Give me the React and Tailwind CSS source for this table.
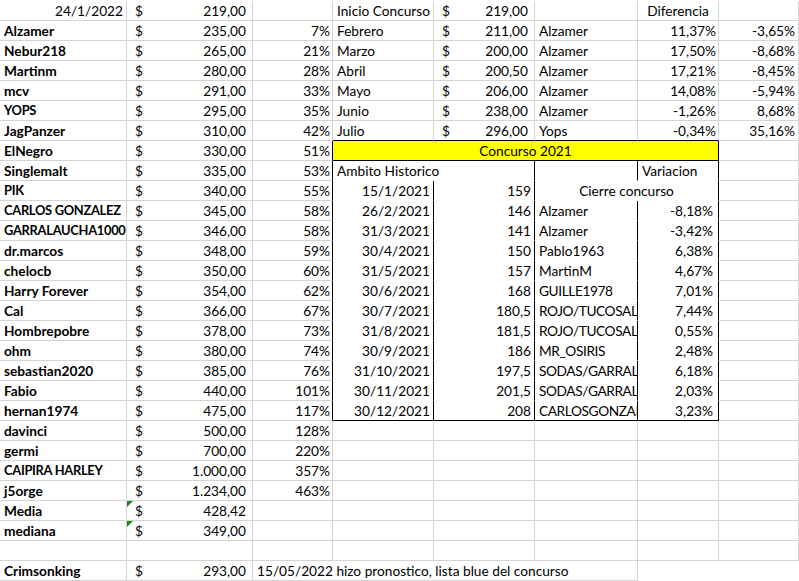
import React from "react";

const R = { g: "border-r-[#d4d4d4]", k: "border-r-black", w: "border-r-white" };
const B = { g: "border-b-[#d4d4d4]", k: "border-b-black", w: "border-b-white" };
const AL = { l: "text-left pl-[4px]", r: "text-right pr-[3px]", c: "text-center" };

function Cell({ w, r = "g", b = "g", a = "l", className = "", children }) {
  return (
    <div
      className={`relative h-[20px] shrink-0 overflow-hidden whitespace-nowrap border-r border-b leading-[19px] ${w} ${R[r]} ${B[b]} ${AL[a]} ${className}`}
    >
      {children}
    </div>
  );
}

function Money({ w, v, r = "g", b = "g", tri = false }) {
  return (
    <div
      className={`relative flex h-[20px] shrink-0 justify-between whitespace-nowrap border-r border-b pl-[8px] pr-[6px] leading-[19px] ${w} ${R[r]} ${B[b]}`}
    >
      {tri && (
        <span className="absolute left-0 top-0 h-0 w-0 border-t-[6px] border-r-[6px] border-t-[#1e8a1e] border-r-transparent" />
      )}
      <span>$</span>
      <span>{v}</span>
    </div>
  );
}

const CAPS = new Set(["YOPS", "PIK", "CARLOS GONZALEZ", "GARRALAUCHA1000", "CAIPIRA HARLEY"]);

const left = [
  ["24/1/2022", "219,00", "", true],
  ["Alzamer", "235,00", "7%"],
  ["Nebur218", "265,00", "21%"],
  ["Martinm", "280,00", "28%"],
  ["mcv", "291,00", "33%"],
  ["YOPS", "295,00", "35%"],
  ["JagPanzer", "310,00", "42%"],
  ["ElNegro", "330,00", "51%"],
  ["Singlemalt", "335,00", "53%"],
  ["PIK", "340,00", "55%"],
  ["CARLOS GONZALEZ", "345,00", "58%"],
  ["GARRALAUCHA1000", "346,00", "58%"],
  ["dr.marcos", "348,00", "59%"],
  ["chelocb", "350,00", "60%"],
  ["Harry Forever", "354,00", "62%"],
  ["Cal", "366,00", "67%"],
  ["Hombrepobre", "378,00", "73%"],
  ["ohm", "380,00", "74%"],
  ["sebastian2020", "385,00", "76%"],
  ["Fabio", "440,00", "101%"],
  ["hernan1974", "475,00", "117%"],
  ["davinci", "500,00", "128%"],
  ["germi", "700,00", "220%"],
  ["CAIPIRA HARLEY", "1.000,00", "357%"],
  ["j5orge", "1.234,00", "463%"],
  ["Media", "428,42", "", false, true],
  ["mediana", "349,00", "", false, true],
  ["", null, ""],
  ["Crimsonking", "293,00", ""],
];

const top = [
  ["Inicio Concurso", "219,00", "", "Diferencia", ""],
  ["Febrero", "211,00", "Alzamer", "11,37%", "-3,65%"],
  ["Marzo", "200,00", "Alzamer", "17,50%", "-8,68%"],
  ["Abril", "200,50", "Alzamer", "17,21%", "-8,45%"],
  ["Mayo", "206,00", "Alzamer", "14,08%", "-5,94%"],
  ["Junio", "238,00", "Alzamer", "-1,26%", "8,68%"],
  ["Julio", "296,00", "Yops", "-0,34%", "35,16%"],
];

const table = [
  ["26/2/2021", "146", "Alzamer", "-8,18%"],
  ["31/3/2021", "141", "Alzamer", "-3,42%"],
  ["30/4/2021", "150", "Pablo1963", "6,38%"],
  ["31/5/2021", "157", "MartinM", "4,67%"],
  ["30/6/2021", "168", "GUILLE1978", "7,01%", true],
  ["30/7/2021", "180,5", "ROJO/TUCOSALMON", "7,44%", true],
  ["31/8/2021", "181,5", "ROJO/TUCOSALMON", "0,55%", true],
  ["30/9/2021", "186", "MR_OSIRIS", "2,48%", true],
  ["31/10/2021", "197,5", "SODAS/GARRALAUCHA", "6,18%", true],
  ["30/11/2021", "201,5", "SODAS/GARRALAUCHA", "2,03%", true],
  ["30/12/2021", "208", "CARLOSGONZALEZ", "3,23%", true],
];

function RightPart({ i }) {
  const row = i + 1;
  if (row <= 7) {
    const [d, e, f, g, h] = top[i];
    const bb = row === 7 ? "k" : "g";
    return (
      <>
        <Cell w="w-[101px]" b={bb}>{d}</Cell>
        <Money w="w-[101px]" v={e} b={bb} />
        <Cell w="w-[103px]" b={bb}>{f}</Cell>
        <Cell w="w-[81px]" b={bb} a={row === 1 ? "c" : "r"} className={row === 1 ? "" : "!pr-[2px]"}>{g}</Cell>
        <Cell w="w-[80px]" a="r">{h}</Cell>
      </>
    );
  }
  if (row === 8) {
    return (
      <>
        <Cell w="w-[386px]" r="k" b="k" a="c" className="bg-[#ffff00]">Concurso 2021</Cell>
        <Cell w="w-[80px]" />
      </>
    );
  }
  if (row === 9) {
    return (
      <>
        <Cell w="w-[202px]" r="k" b="w">Ambito Historico</Cell>
        <Cell w="w-[103px]" r="k" b="w" />
        <Cell w="w-[81px]" r="k" b="w">Variacion</Cell>
        <Cell w="w-[80px]" />
      </>
    );
  }
  if (row === 10) {
    return (
      <>
        <Cell w="w-[101px]" r="k" b="w" a="r">15/1/2021</Cell>
        <Cell w="w-[101px]" r="k" b="w" a="r">159</Cell>
        <Cell w="w-[184px]" r="k" b="w" a="c">Cierre concurso</Cell>
        <Cell w="w-[80px]" />
      </>
    );
  }
  if (row <= 21) {
    const [d, e, f, g, capsName] = table[row - 11];
    const bb = row === 21 ? "k" : "w";
    return (
      <>
        <Cell w="w-[101px]" r="k" b={bb} a="r">{d}</Cell>
        <Cell w="w-[101px]" r="k" b={bb} a="r">{e}</Cell>
        <Cell w="w-[103px]" r="k" b={bb} className={capsName ? "tracking-[-0.4px]" : ""}>{f}</Cell>
        <Cell w="w-[81px]" r="k" b={bb} a="r" className="!pr-[5px]">{g}</Cell>
        <Cell w="w-[80px]" />
      </>
    );
  }
  if (row === 29) {
    return (
      <>
        <Cell w="w-[81px]" />
        <Cell w="w-[80px]" />
      </>
    );
  }
  return (
    <>
      <Cell w="w-[101px]" />
      <Cell w="w-[101px]" />
      <Cell w="w-[103px]" />
      <Cell w="w-[81px]" />
      <Cell w="w-[80px]" />
    </>
  );
}

export default function App() {
  return (
    <div className="h-[581px] w-[799px] overflow-hidden bg-white pt-[1px] font-['Lato','Open_Sans',sans-serif] text-[13.7px] text-black">
      {left.map(([a, b, c, plainA, tri], i) => {
        const row = i + 1;
        const inTable = row >= 8 && row <= 21;
        const caps = CAPS.has(a);
        return (
          <div key={i} className="flex">
            <Cell
              w="w-[127px]"
              a={plainA ? "r" : "l"}
              className={plainA ? "" : caps ? "font-bold text-[12.9px] tracking-[-0.3px]" : "font-bold"}
            >
              {a}
            </Cell>
            {b === null ? <Cell w="w-[126px]" /> : <Money w="w-[126px]" v={b} tri={tri} />}
            {row === 29 ? (
              <Cell w="w-[385px]" className="!pl-[4px]">
                15/05/2022 hizo pronostico, lista blue del concurso
              </Cell>
            ) : (
              <>
                <Cell w="w-[80px]" a="r" r={inTable ? "k" : "g"} className="!pr-[2px]">
                  {c}
                </Cell>
                <RightPart i={i} />
              </>
            )}
          </div>
        );
      })}
    </div>
  );
}
